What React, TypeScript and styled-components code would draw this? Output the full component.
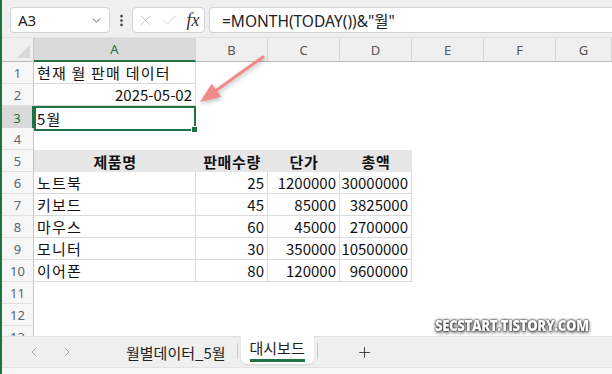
import React from "react";
import styled, { createGlobalStyle, css } from "styled-components";
import {
  ChevronDown,
  EllipsisVertical,
  X,
  Check,
  ChevronLeft,
  ChevronRight,
  Plus
} from "lucide-react";

const GREEN = "#217346";

type Align = "left" | "right" | "center";

interface CellData {
  text?: string;
  align?: Align;
  head?: boolean;
  boxed?: boolean;
  selected?: boolean;
}

const COLUMNS = ["A", "B", "C", "D", "E", "F", "G"];

const products: [string, number, number, number][] = [
  ["노트북", 25, 1200000, 30000000],
  ["키보드", 45, 85000, 3825000],
  ["마우스", 60, 45000, 2700000],
  ["모니터", 30, 350000, 10500000],
  ["이어폰", 80, 120000, 9600000]
];

const sheetRows: CellData[][] = [
  [{ text: "현재 월 판매 데이터", boxed: true }],
  [{ text: "2025-05-02", align: "right", boxed: true }],
  [{ text: "5월", selected: true }],
  [],
  ["제품명", "판매수량", "단가", "총액"].map((text) => ({ text, head: true })),
  ...products.map(([name, qty, price, total]) => [
    { text: name, boxed: true },
    { text: String(qty), align: "right" as Align, boxed: true },
    { text: String(price), align: "right" as Align, boxed: true },
    { text: String(total), align: "right" as Align, boxed: true }
  ]),
  [],
  [],
  []
];

// hangul text in the sheet is set a little wider than the font's default
const isHangul = (text?: string) => !!text && /[가-힣]/.test(text);

const App = () => {
  return (
    <>
      <GlobalStyle />
      <Window>
        <FormulaBar>
          <NameBox>
            <span>A3</span>
            <ChevronDown size={13} strokeWidth={1.6} color="#444" />
          </NameBox>
          <Dots>
            <EllipsisVertical size={15} strokeWidth={2.4} color="#444" />
          </Dots>
          <FxBox>
            <FxSlot $w={22}>
              <X size={17} strokeWidth={1.1} color="#c4c4c4" />
            </FxSlot>
            <FxSlot $w={26}>
              <Check size={17} strokeWidth={1.1} color="#c4c4c4" />
            </FxSlot>
            <FxSlot $w={22}>
              <FxLabel>fx</FxLabel>
            </FxSlot>
          </FxBox>
          <FormulaInput>=MONTH(TODAY())&amp;"월"</FormulaInput>
        </FormulaBar>

        <Sheet>
          <GridRow $height={25}>
            <Corner />
            {COLUMNS.map((col) => (
              <ColHeader key={col} $active={col === "A"}>
                {col}
              </ColHeader>
            ))}
          </GridRow>
          {sheetRows.map((cells, r) => (
            <GridRow key={r} $height={22}>
              <RowHeader $active={r === 2}>{r + 1}</RowHeader>
              {COLUMNS.map((col, c) => {
                const cell = cells[c];
                return (
                  <Cell
                    key={col}
                    $align={cell?.align ?? (cell?.head ? "center" : "left")}
                    $head={!!cell?.head}
                    $boxed={!!cell?.boxed}
                    $selected={!!cell?.selected}
                    $wide={isHangul(cell?.text)}
                  >
                    {cell?.text}
                    {cell?.selected && <FillHandle />}
                  </Cell>
                );
              })}
            </GridRow>
          ))}

          <Arrow width="80" height="60" viewBox="0 0 80 60">
            <line
              x1="73"
              y1="7"
              x2="24"
              y2="42"
              stroke="#f28a8a"
              strokeWidth="3"
              strokeLinecap="round"
            />
            <polygon points="10,52 21.7,33.8 31.1,46.8" fill="#f28a8a" />
          </Arrow>
          <Watermark>SECSTART.TISTORY.COM</Watermark>
        </Sheet>

        <TabBar>
          <NavButton>
            <ChevronLeft size={16} strokeWidth={1.3} color="#9a9a9a" />
          </NavButton>
          <NavButton>
            <ChevronRight size={16} strokeWidth={1.3} color="#9a9a9a" />
          </NavButton>
          <SheetTab>월별데이터_5월</SheetTab>
          <TabDivider />
          <SheetTab $active>
            <span>대시보드</span>
          </SheetTab>
          <TabDivider />
          <AddSheet>
            <Plus size={17} strokeWidth={1.3} color="#333" />
          </AddSheet>
        </TabBar>
        <StatusStrip />
      </Window>
    </>
  );
};

const GlobalStyle = createGlobalStyle`
  html, body {
    margin: 0;
    padding: 0;
    background: #ffffff;
  }
  body {
    font-family: "Noto Sans", "Noto Sans CJK KR", sans-serif;
  }
`;

const Window = styled.div`
  width: 612px;
  height: 374px;
  box-sizing: border-box;
  border-left: 2px solid ${GREEN};
  display: flex;
  flex-direction: column;
  overflow: hidden;
  background: #ffffff;
`;

const FormulaBar = styled.div`
  height: 37px;
  flex: none;
  box-sizing: border-box;
  padding: 3px 0 0 8px;
  display: flex;
  align-items: center;
  background: #efefef;
`;

const boxStyle = css`
  height: 26px;
  box-sizing: border-box;
  background: #ffffff;
  border: 1px solid #d3d3d3;
  border-radius: 4px;
`;

const NameBox = styled.div`
  ${boxStyle};
  width: 100px;
  display: flex;
  align-items: center;
  justify-content: space-between;
  padding: 0 6px 0 7px;
  font-size: 15px;
  color: #222;
`;

const Dots = styled.div`
  width: 22px;
  display: flex;
  justify-content: center;
`;

const FxBox = styled.div`
  ${boxStyle};
  width: 73px;
  display: flex;
  align-items: center;
  padding-left: 1px;
`;

const FxSlot = styled.div<{ $w: number }>`
  width: ${({ $w }) => $w}px;
  display: flex;
  justify-content: center;
  align-items: center;
`;

const FxLabel = styled.span`
  font-family: "Liberation Serif", serif;
  font-style: italic;
  font-size: 18px;
  color: #333;
  line-height: 1;
`;

const FormulaInput = styled.div`
  ${boxStyle};
  flex: 1;
  margin-left: 4px;
  border-right: 0;
  border-radius: 4px 0 0 4px;
  display: flex;
  align-items: center;
  padding-left: 12px;
  font-size: 15.5px;
  color: #222;
  font-family: "Noto Sans", "Noto Sans CJK KR", sans-serif;
`;

const Sheet = styled.div`
  position: relative;
  flex: 1;
  overflow: hidden;
`;

const GridRow = styled.div<{ $height: number }>`
  display: grid;
  grid-template-columns: 32px 162px repeat(5, 72px) 1fr;
  height: ${({ $height }) => $height}px;
`;

const Corner = styled.div`
  position: relative;
  background: #efefef;
  border-right: 1px solid #c8c8c8;
  border-bottom: 1px solid #b8b8b8;
  border-top: 1px solid #e2e2e2;
  &::after {
    content: "";
    position: absolute;
    right: 3px;
    bottom: 3px;
    border-left: 13px solid transparent;
    border-bottom: 13px solid #d8d8d8;
  }
`;

const ColHeader = styled.div<{ $active: boolean }>`
  display: flex;
  align-items: center;
  justify-content: center;
  box-sizing: border-box;
  font-size: 13px;
  color: ${({ $active }) => ($active ? GREEN : "#555")};
  background: ${({ $active }) => ($active ? "#d9d9d9" : "#efefef")};
  border-top: 1px solid #e2e2e2;
  border-right: 1px solid #d6d6d6;
  border-bottom: ${({ $active }) =>
    $active ? `2px solid ${GREEN}` : "1px solid #b8b8b8"};
`;

const RowHeader = styled.div<{ $active: boolean }>`
  display: flex;
  align-items: center;
  justify-content: center;
  box-sizing: border-box;
  font-size: 13px;
  color: ${({ $active }) => ($active ? GREEN : "#5c6470")};
  background: ${({ $active }) => ($active ? "#d9d9d9" : "#f6f6f6")};
  border-bottom: 1px solid #e0e0e0;
  border-right: ${({ $active }) =>
    $active ? `2px solid ${GREEN}` : "1px solid #c8c8c8"};
`;

const Cell = styled.div<{
  $align: Align;
  $head: boolean;
  $boxed: boolean;
  $selected: boolean;
  $wide: boolean;
}>`
  position: relative;
  display: flex;
  align-items: center;
  box-sizing: border-box;
  padding: 0 3px;
  white-space: nowrap;
  overflow: visible;
  font-family: "Noto Sans CJK KR", "Noto Sans", sans-serif;
  font-size: 15px;
  color: #111;
  letter-spacing: ${({ $wide, $head }) => ($wide ? ($head ? "0.6px" : "1.2px") : "0")};
  justify-content: ${({ $align }) =>
    $align === "right" ? "flex-end" : $align === "center" ? "center" : "flex-start"};
  ${({ $head }) =>
    $head &&
    css`
      background: #e7e6e6;
      font-weight: 700;
    `}
  ${({ $boxed }) =>
    $boxed &&
    css`
      border-right: 1px solid #dadada;
      border-bottom: 1px solid #dadada;
    `}
  ${({ $selected }) =>
    $selected &&
    css`
      border: 2px solid ${GREEN};
      padding: 0 1px;
    `}
`;

const FillHandle = styled.div`
  position: absolute;
  right: -4px;
  bottom: -4px;
  width: 5px;
  height: 5px;
  background: ${GREEN};
  border: 1px solid #ffffff;
`;

const Arrow = styled.svg`
  position: absolute;
  left: 188px;
  top: 13px;
  overflow: visible;
  filter: drop-shadow(1px 2px 2px rgba(0, 0, 0, 0.25));
`;

const Watermark = styled.div`
  position: absolute;
  right: 23px;
  bottom: 3px;
  font-family: "Open Sans", "Noto Sans", sans-serif;
  font-weight: 800;
  font-size: 15px;
  line-height: 1;
  letter-spacing: -0.4px;
  color: #ffffff;
  transform: scaleX(0.88);
  transform-origin: right center;
  text-shadow: 0 0 2px #222, 0 0 3px #333, 1px 2px 4px rgba(0, 0, 0, 0.6);
`;

const TabBar = styled.div`
  height: 31px;
  flex: none;
  box-sizing: border-box;
  display: flex;
  align-items: stretch;
  padding-left: 15px;
  background: #efefef;
  border-top: 1px solid #e0e0e0;
`;

const NavButton = styled.div`
  width: 33px;
  display: flex;
  align-items: center;
  justify-content: center;
`;

const SheetTab = styled.div<{ $active?: boolean }>`
  display: flex;
  align-items: center;
  padding: 0 9px;
  margin-left: ${({ $active }) => ($active ? "3px" : "34px")};
  margin-right: ${({ $active }) => ($active ? "3px" : "2px")};
  font-family: "Noto Sans CJK KR", "Noto Sans", sans-serif;
  font-size: 15px;
  color: #222;
  ${({ $active }) =>
    $active &&
    css`
      margin-top: -1px;
      margin-bottom: 3px;
      background: #ffffff;
      border-radius: 0 0 6px 6px;
      box-shadow: 0 1px 2px rgba(0, 0, 0, 0.12);
      span {
        position: relative;
        top: -1px;
        padding-bottom: 1px;
        border-bottom: 3px solid ${GREEN};
      }
    `}
`;

const TabDivider = styled.div`
  width: 1px;
  margin: 6px 0 8px;
  background: #c9c9c9;
`;

const AddSheet = styled.div`
  width: 94px;
  display: flex;
  align-items: center;
  justify-content: center;
`;

const StatusStrip = styled.div`
  height: 6px;
  flex: none;
  background: #f7f7f7;
  border-top: 1px solid #e2e2e2;
`;

export default App;
